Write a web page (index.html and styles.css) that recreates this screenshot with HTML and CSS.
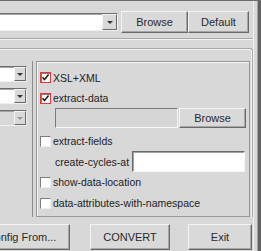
FILE: index.html
```html
<!DOCTYPE html>
<html lang="en">
<head>
    <meta charset="UTF-8">
    <title>Converter</title>
    <link rel="stylesheet" href="styles.css">
</head>
<body>
    <div class="window">
        <div class="client">
            <div class="source-row">
                <div class="combo source-combo">
                    <span class="combo-text"></span>
                    <span class="combo-arrow"><i class="tri"></i></span>
                </div>
                <button class="btn browse-btn">Browse</button>
                <button class="btn default-btn">Default</button>
            </div>
            <div class="etched"></div>
            <div class="options">
                <div class="main">
                    <div class="selectors">
                        <div class="combo small-combo">
                            <span class="combo-text"></span>
                            <span class="combo-arrow"><i class="tri"></i></span>
                        </div>
                        <div class="combo small-combo">
                            <span class="combo-text"></span>
                            <span class="combo-arrow"><i class="tri"></i></span>
                        </div>
                        <div class="combo small-combo disabled">
                            <span class="combo-text"></span>
                            <span class="combo-arrow"><i class="tri"></i></span>
                        </div>
                    </div>
                    <div class="flags">
                        <label class="flag row-first">
                            <span class="check on">
                                <svg width="9" height="9" viewBox="0 0 9 9"><polyline points="1.5,4.2 3.5,6.6 7.6,1.6" fill="none" stroke="#222" stroke-width="1.6"/></svg>
                            </span>
                            XSL+XML
                        </label>
                        <label class="flag">
                            <span class="check on">
                                <svg width="9" height="9" viewBox="0 0 9 9"><polyline points="1.5,4.2 3.5,6.6 7.6,1.6" fill="none" stroke="#222" stroke-width="1.6"/></svg>
                            </span>
                            extract-data
                        </label>
                        <div class="file-row">
                            <span class="field"></span>
                            <button class="btn">Browse</button>
                        </div>
                        <label class="flag row-gap">
                            <span class="check"></span>
                            extract-fields
                        </label>
                        <div class="cycles-row">
                            <span class="cycles-label">create-cycles-at</span>
                            <span class="input"></span>
                        </div>
                        <label class="flag">
                            <span class="check"></span>
                            show-data-location
                        </label>
                        <label class="flag row-last">
                            <span class="check"></span>
                            data-attributes-with-namespace
                        </label>
                    </div>
                </div>
            </div>
            <div class="actions">
                <button class="btn config-btn">Config From...</button>
                <button class="btn convert-btn">CONVERT</button>
                <button class="btn exit-btn">Exit</button>
            </div>
        </div>
        <div class="edge"></div>
    </div>
</body>
</html>
```
FILE: styles.css
```css
* {
    box-sizing: border-box;
    margin: 0;
    padding: 0;
}
body {
    background-color: #d8d8d8;
    font-family: "Liberation Sans", Arial, sans-serif;
    color: #222;
    overflow: hidden;
}
.window {
    width: 261px;
    height: 251px;
    display: flex;
    border-top: 1px solid #6b6b6b;
    overflow: hidden;
}
.client {
    width: 254px;
    flex: none;
    display: flex;
    flex-direction: column;
    border-right: 1px solid #f0f0f0;
}
.edge {
    flex: 1;
    background: linear-gradient(to right, #d8d8d8 0 3px, #a3a3a3 3px 4px, #626262 4px);
}

/* buttons */
.btn {
    height: 100%;
    font-family: "Liberation Sans", Arial, sans-serif;
    font-size: 11px;
    color: #2a2a2a;
    background-color: #d9d9d9;
    border: 1px solid;
    border-color: #f4f4f4 #6a6a6a #6a6a6a #f4f4f4;
    box-shadow: inset -1px -1px 0 #a6a6a6;
}

/* combo boxes */
.combo {
    display: flex;
    background-color: #fff;
    border: 1px solid;
    border-color: #6e6e6e #f0f0f0 #f0f0f0 #6e6e6e;
    box-shadow: inset 1px 1px 0 #a4a4a4;
}
.combo-text {
    flex: 1;
}
.combo-arrow {
    display: flex;
    justify-content: center;
    align-items: center;
    background-color: #d9d9d9;
    border: 1px solid;
    border-color: #f4f4f4 #6a6a6a #6a6a6a #f4f4f4;
}
.tri {
    width: 0;
    height: 0;
    border-left: 3px solid transparent;
    border-right: 3px solid transparent;
    border-top: 3px solid #333;
}
.combo.disabled {
    background-color: #d8d8d8;
}
.combo.disabled .tri {
    border-top-color: #9a9a9a;
}

/* top row */
.source-row {
    display: flex;
    align-items: center;
    height: 22px;
    margin-top: 10px;
    padding-right: 4px;
}
.source-combo {
    flex: 1;
    height: 18px;
    margin-left: -20px;
    margin-right: 3px;
}
.source-combo .combo-arrow {
    width: 15px;
}
.browse-btn {
    width: 67px;
}
.default-btn {
    width: 61px;
}
.etched {
    height: 2px;
    margin-top: 5px;
    border-top: 1px solid #a8a8a8;
    border-bottom: 1px solid #f2f2f2;
}

/* options area */
.options {
    margin-top: 8px;
    border-top: 1px solid #a8a8a8;
    border-right: 1px solid #a8a8a8;
    border-top-right-radius: 3px;
    box-shadow: inset 0 1px 0 #f2f2f2, inset -1px 0 0 #f2f2f2;
}
.main {
    display: flex;
    padding-top: 12px;
}
.selectors {
    width: 53px;
    margin-left: -20px;
    padding: 5px 5px 0 0;
    display: flex;
    flex-direction: column;
    gap: 6px;
    border-right: 1px solid #8c8c8c;
}
.small-combo {
    height: 16px;
}
.small-combo .combo-arrow {
    width: 12px;
}
.flags {
    width: 214px;
    margin-left: 3px;
    padding: 5px 3px 2px 3px;
    display: flex;
    flex-direction: column;
    border: 1px solid #979797;
    box-shadow: inset 1px 1px 0 #f3f3f3;
    font-size: 10.5px;
}
.flag {
    display: flex;
    align-items: center;
    gap: 2px;
    height: 20px;
}
.row-first {
    height: 21px;
}
.row-gap {
    margin-top: 3px;
}
.row-last {
    height: 22px;
}
.check {
    width: 11px;
    height: 11px;
    flex: none;
    display: flex;
    justify-content: center;
    align-items: center;
    background-color: #fff;
    border: 1px solid;
    border-color: #7d7d7d #eeeeee #eeeeee #7d7d7d;
}
.check.on {
    border-color: #de3a3a;
    box-shadow: inset 1px 1px 0 #7d7d7d;
}
.file-row {
    display: flex;
    gap: 1px;
    height: 20px;
    padding-left: 15px;
}
.field {
    flex: 1;
    background-color: #d6d6d6;
    border: 1px solid;
    border-color: #7a7a7a #f6f6f6 #f6f6f6 #7a7a7a;
}
.file-row .btn {
    width: 67px;
}
.cycles-row {
    display: flex;
    align-items: center;
    height: 21px;
    padding-left: 15px;
}
.input {
    width: 113px;
    height: 21px;
    margin-left: auto;
    margin-right: 1px;
    background-color: #fff;
    border: 1px solid;
    border-color: #6a6a6a #f6f6f6 #f6f6f6 #6a6a6a;
    box-shadow: inset 1px 1px 0 #a4a4a4;
}

/* bottom buttons */
.actions {
    display: flex;
    height: 26px;
    margin-top: 7px;
    margin-left: -27px;
}
.config-btn {
    width: 97px;
}
.convert-btn {
    width: 80px;
    margin-left: 20px;
}
.exit-btn {
    width: 64px;
    margin-left: 18px;
}
```
